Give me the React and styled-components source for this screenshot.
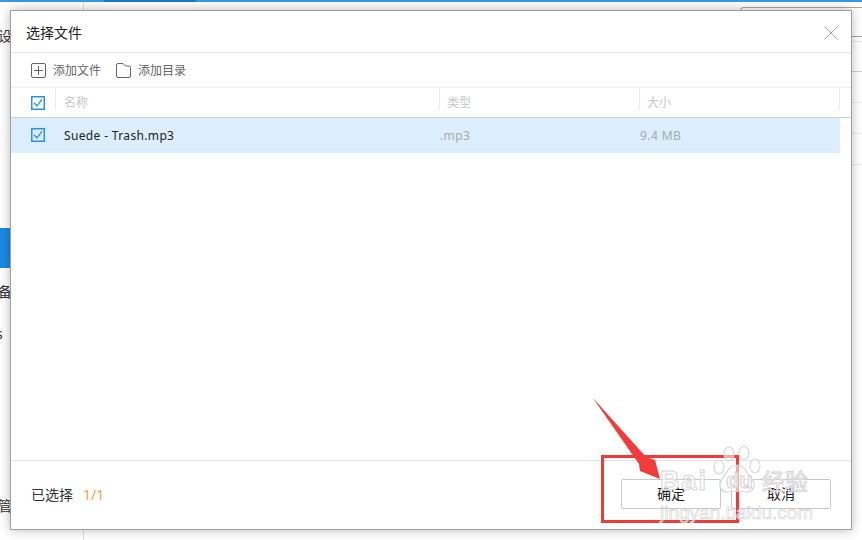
import styled, { createGlobalStyle } from 'styled-components';

const CJK = `"Noto Sans", "Noto Sans CJK SC", sans-serif`;

const GlobalStyle = createGlobalStyle`
    html, body {
        margin: 0;
        padding: 0;
        width: 862px;
        height: 540px;
        overflow: hidden;
        background: #fff;
        font-family: ${CJK};
    }
`;

function CheckBox() {
    return (
        <svg width="14" height="14" viewBox="0 0 14 14">
            <rect x="0.75" y="0.75" width="12.5" height="12.5" fill="none" stroke="#2b93e6" strokeWidth="1.5" />
            <path d="M3 6.8 L5.9 10 L11 3.4" fill="none" stroke="#2b93e6" strokeWidth="1.3" />
        </svg>
    );
}

export default function App() {
    return (
        <Page>
            <GlobalStyle />
            <TopBar>
                <TopBarActive />
            </TopBar>
            <Behind>
                <Sidebar>
                    <SideText $top={24}>设置</SideText>
                    <SideActive $top={182} />
                    <SideText $top={14}>备份</SideText>
                    <SideText $top={22} $shift={-4}>s</SideText>
                    <SideText $top={152}>管理</SideText>
                </Sidebar>
                <Content>
                    <SearchBox />
                    <BgLine $top={4} $color="#e6e6e6" />
                    <BgLine $top={29} $color="#cfcfcf" />
                    <BgLine $top={30} $color="#eeeeee" />
                    <BgLine $top={30} $color="#eeeeee" />
                    <BgLine $top={30} $color="#eeeeee" />
                </Content>
            </Behind>

            <Dialog>
                <Header>
                    <Title>选择文件</Title>
                    <CloseIcon width="14" height="14" viewBox="0 0 14 14">
                        <path d="M0.5 0.5 L13.5 13.5 M13.5 0.5 L0.5 13.5" stroke="#a8a8a8" strokeWidth="1" fill="none" />
                    </CloseIcon>
                </Header>
                <Toolbar>
                    <ToolButton>
                        <svg width="15" height="15" viewBox="0 0 15 15">
                            <rect x="0.5" y="0.5" width="14" height="14" rx="1.5" fill="none" stroke="#666" />
                            <path d="M3 7.5 H12 M7.5 3 V12" stroke="#666" fill="none" />
                        </svg>
                        添加文件
                    </ToolButton>
                    <ToolButton>
                        <svg width="15" height="15" viewBox="0 0 15 15">
                            <path d="M0.5 2 Q0.5 0.5 2 0.5 H7 L9.5 3 H13 Q14.5 3 14.5 4.5 V13 Q14.5 14.5 13 14.5 H2 Q0.5 14.5 0.5 13 Z" fill="none" stroke="#666" />
                        </svg>
                        添加目录
                    </ToolButton>
                </Toolbar>
                <TableHead>
                    <HeadCheck><CheckBox /></HeadCheck>
                    <HeadCell $first>名称</HeadCell>
                    <HeadCell>类型</HeadCell>
                    <HeadCell>大小</HeadCell>
                </TableHead>
                <FileRow>
                    <CheckCell><CheckBox /></CheckCell>
                    <FileName>Suede - Trash.mp3</FileName>
                    <FileMeta>.mp3</FileMeta>
                    <FileMeta>9.4 MB</FileMeta>
                </FileRow>
                <Spacer />
                <Footer>
                    <Selected>已选择<Count>1/1</Count></Selected>
                    <Buttons>
                        <Button>确定</Button>
                        <Button>取消</Button>
                    </Buttons>
                </Footer>
            </Dialog>

            <Highlight />
            <Arrow width="80" height="90" viewBox="0 0 80 90">
                <polygon points="2.5,2.5 56,62 65,65 70,84 50,76 49,69" fill="#f23c3c" />
            </Arrow>

            <Watermark>
                <WmBai>Bai</WmBai>
                <PawMark>
                    <svg width="50" height="50" viewBox="0 0 50 50">
                        <g fill="rgba(255,255,255,0.55)" stroke="#d8d8d8" strokeWidth="1.2">
                            <ellipse cx="7" cy="21" rx="5" ry="7" />
                            <ellipse cx="17" cy="8" rx="5" ry="7" />
                            <ellipse cx="32" cy="7" rx="5" ry="6.5" />
                            <ellipse cx="43" cy="20" rx="5" ry="7" />
                            <path d="M25 19 C16 19 15 28 10 33 C5 39 9 47 17 46 C22 45 28 45 33 46 C41 47 45 39 40 33 C35 28 33 19 25 19 Z" />
                        </g>
                    </svg>
                    <WmDu>du</WmDu>
                </PawMark>
                <WmCn>经验</WmCn>
                <WmUrl>jingyan.baidu.com</WmUrl>
            </Watermark>
        </Page>
    );
}

const Page = styled.div`
    position: relative;
    width: 862px;
    height: 540px;
    overflow: hidden;
    background: #fff;
    display: flex;
    flex-direction: column;
`;

const TopBar = styled.div`
    height: 2px;
    flex: none;
    background: #3a97e2;
    padding-left: 104px;
`;

const TopBarActive = styled.div`
    width: 92px;
    height: 2px;
    background: #1c78c4;
`;

const Behind = styled.div`
    flex: 1;
    display: flex;
`;

const Sidebar = styled.div`
    width: 83px;
    flex: none;
    border-right: 1px solid #dcdcdc;
    display: flex;
    flex-direction: column;
`;

const SideText = styled.div`
    margin-top: ${p => p.$top}px;
    margin-left: ${p => p.$shift || -2}px;
    height: 20px;
    line-height: 20px;
    font-size: 14px;
    color: #333;
    white-space: nowrap;
`;

const SideActive = styled.div`
    margin-top: ${p => p.$top}px;
    height: 40px;
    background: #1a8ae3;
`;

const Content = styled.div`
    flex: 1;
    display: flex;
    flex-direction: column;
`;

const SearchBox = styled.div`
    align-self: flex-end;
    width: 122px;
    height: 30px;
    margin-top: 5px;
    box-sizing: border-box;
    border: 1px solid #a8a8a8;
    border-right: 0;
    border-radius: 4px 0 0 0;
`;

const BgLine = styled.div`
    height: 1px;
    margin-top: ${p => p.$top}px;
    background: ${p => p.$color};
`;

const Dialog = styled.div`
    position: absolute;
    left: 10px;
    top: 10px;
    width: 842px;
    height: 520px;
    box-sizing: border-box;
    background: #fff;
    border: 1px solid #a0a0a0;
    box-shadow: 0 0 10px rgba(0, 0, 0, 0.28);
    display: flex;
    flex-direction: column;
`;

const Header = styled.div`
    height: 42px;
    flex: none;
    box-sizing: border-box;
    border-bottom: 1px solid #e6e6e6;
    display: flex;
    align-items: center;
    justify-content: space-between;
    padding: 0 13px 0 15px;
`;

const Title = styled.div`
    font-size: 14px;
    color: #222;
`;

const CloseIcon = styled.svg`
    margin-top: 3px;
`;

const Toolbar = styled.div`
    height: 35px;
    flex: none;
    box-sizing: border-box;
    border-bottom: 1px solid #ececec;
    display: flex;
    align-items: center;
    gap: 15px;
    padding-left: 20px;
`;

const ToolButton = styled.div`
    display: flex;
    align-items: center;
    gap: 7px;
    font-size: 12px;
    color: #666;
`;

const TableHead = styled.div`
    height: 30px;
    flex: none;
    box-sizing: border-box;
    border-bottom: 1px solid #d2d2d2;
    display: grid;
    grid-template-columns: 44px 385px 200px 200px;
    grid-template-rows: 29px;
`;

const CheckCell = styled.div`
    display: flex;
    align-items: center;
    padding-left: 20px;
`;

const HeadCheck = styled(CheckCell)`
    padding-top: 1px;
`;

const HeadCell = styled.div`
    height: 22px;
    border-right: 1px solid #ececec;
    border-left: ${p => (p.$first ? '1px solid #ececec' : '0')};
    padding-left: ${p => (p.$first ? 8 : 7)}px;
    font-size: 12px;
    line-height: 30px;
    color: #c8c8c8;
`;

const FileRow = styled.div`
    height: 35px;
    width: 829px;
    flex: none;
    box-sizing: border-box;
    padding-bottom: 1px;
    background: #dcedfd;
    display: grid;
    grid-template-columns: 44px 385px 200px 200px;
    align-items: center;
`;

const FileName = styled.div`
    padding-left: 9px;
    font-size: 12px;
    letter-spacing: 0.35px;
    color: #222;
`;

const FileMeta = styled.div`
    font-size: 12px;
    letter-spacing: 0.4px;
    color: #aaa;
`;

const Spacer = styled.div`
    flex: 1;
`;

const Footer = styled.div`
    height: 69px;
    flex: none;
    box-sizing: border-box;
    border-top: 1px solid #e4e4e4;
    display: flex;
    align-items: center;
    justify-content: space-between;
    padding: 0 20px 2px;
`;

const Selected = styled.div`
    font-size: 14px;
    color: #333;
`;

const Count = styled.span`
    margin-left: 10px;
    color: #f5a03c;
`;

const Buttons = styled.div`
    display: flex;
    gap: 10px;
`;

const Button = styled.div`
    width: 100px;
    height: 30px;
    box-sizing: border-box;
    border: 1px solid #c8c8c8;
    border-radius: 2px;
    text-align: center;
    line-height: 28px;
    font-size: 14px;
    color: #222;
`;

const Highlight = styled.div`
    position: absolute;
    left: 601px;
    top: 455px;
    width: 138px;
    height: 68px;
    box-sizing: border-box;
    border: 3px solid #f03a3a;
`;

const Arrow = styled.svg`
    position: absolute;
    left: 590px;
    top: 395px;
`;

const Watermark = styled.div`
    position: absolute;
    left: 660px;
    top: 446px;
    width: 156px;
    height: 76px;
`;

const WmBai = styled.span`
    position: absolute;
    left: 0;
    top: 20px;
    font-family: "Liberation Sans", sans-serif;
    font-weight: bold;
    font-size: 27px;
    letter-spacing: 2px;
    line-height: 30px;
    color: rgba(255, 255, 255, 0.6);
    -webkit-text-stroke: 1px #d6d6d6;
`;

const PawMark = styled.div`
    position: absolute;
    left: 52px;
    top: 0;
    width: 50px;
    height: 50px;
`;

const WmDu = styled.span`
    position: absolute;
    left: 14px;
    top: 22px;
    font-family: "Liberation Sans", sans-serif;
    font-weight: bold;
    font-size: 22px;
    line-height: 26px;
    color: rgba(255, 255, 255, 0.6);
    -webkit-text-stroke: 1px #d0d0d0;
`;

const WmCn = styled.span`
    position: absolute;
    left: 102px;
    top: 20px;
    font-size: 23px;
    line-height: 30px;
    color: rgba(255, 255, 255, 0.6);
    -webkit-text-stroke: 1px #d6d6d6;
`;

const WmUrl = styled.div`
    position: absolute;
    left: 0;
    top: 57px;
    font-family: "Liberation Sans", sans-serif;
    font-size: 19px;
    line-height: 20px;
    color: rgba(255, 255, 255, 0.6);
    -webkit-text-stroke: 0.7px #d6d6d6;
    white-space: nowrap;
`;
